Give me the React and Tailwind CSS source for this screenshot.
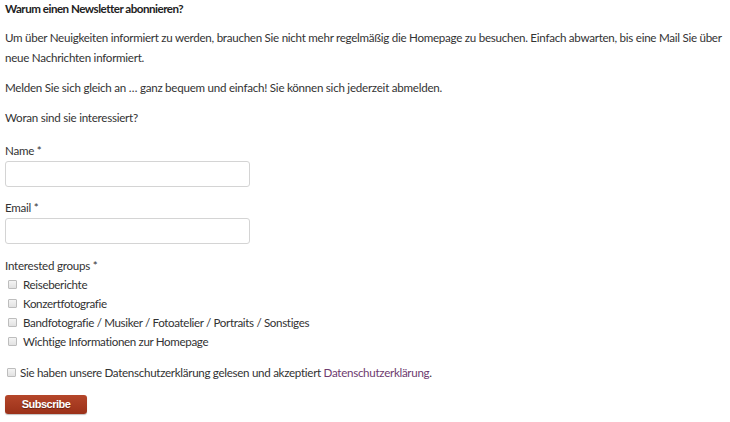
function Box() {
  return (
    <span className="inline-block w-[9px] h-[9px] shrink-0 rounded-[1px] border border-[#bdbdbd] bg-gradient-to-b from-[#f4f4f4] to-[#e2e2e2]" />
  );
}

export default function App() {
  const groups = [
    "Reiseberichte",
    "Konzertfotografie",
    "Bandfotografie / Musiker / Fotoatelier / Portraits / Sonstiges",
    "Wichtige Informationen zur Homepage",
  ];
  return (
    <div className="bg-white min-h-[422px] pl-[5px] text-[#333] text-[11.6px] tracking-[-0.25px]" style={{ fontFamily: "Lato, 'Open Sans', sans-serif" }}>
      <h3 className="font-bold leading-[18px] text-[#222] tracking-[-0.5px]">Warum einen Newsletter abonnieren?</h3>
      <p className="mt-[10px] leading-[20px] whitespace-nowrap tracking-[-0.27px]">
        Um über Neuigkeiten informiert zu werden, brauchen Sie nicht mehr regelmäßig die Homepage zu besuchen. Einfach abwarten, bis eine Mail Sie über
        <br />
        neue Nachrichten informiert.
      </p>
      <p className="mt-[10px] leading-[20px]">Melden Sie sich gleich an … ganz bequem und einfach! Sie können sich jederzeit abmelden.</p>
      <p className="mt-[10px] leading-[20px]">Woran sind sie interessiert?</p>

      <div className="mt-[13px] leading-[20px]">Name *</div>
      <input type="text" className="block w-[245px] h-[26px] rounded-[3px] border border-[#d4d4d4] bg-white outline-none" />

      <div className="mt-[11px] leading-[20px]">Email *</div>
      <input type="email" className="block w-[245px] h-[26px] rounded-[3px] border border-[#d4d4d4] bg-white outline-none" />

      <div className="mt-[12px] leading-[19px]">Interested groups *</div>
      <div className="flex flex-col">
        {groups.map((g) => (
          <label key={g} className="flex items-center gap-[6px] pl-[3px] leading-[19px] tracking-[-0.35px]">
            <Box />
            <span>{g}</span>
          </label>
        ))}
      </div>

      <label className="mt-[12px] flex items-center gap-[4px] pl-[2px] leading-[19px] tracking-[-0.3px]">
        <Box />
        <span>
          Sie haben unsere Datenschutzerklärung gelesen und akzeptiert{" "}
          <a className="text-[#6e3b6f]">Datenschutzerklärung</a>.
        </span>
      </label>

      <button
        type="button"
        className="mt-[13px] block w-[82px] h-[19px] rounded-[3px] bg-gradient-to-b from-[#b5462a] to-[#9b3119] text-white text-[11px] font-bold leading-[19px] tracking-[-0.5px] shadow-[0_1px_1px_rgba(0,0,0,0.25)] [text-shadow:0_1px_1px_rgba(0,0,0,0.4)]"
        style={{ fontFamily: "'Liberation Sans', Arial, sans-serif" }}
      >
        Subscribe
      </button>
    </div>
  );
}
